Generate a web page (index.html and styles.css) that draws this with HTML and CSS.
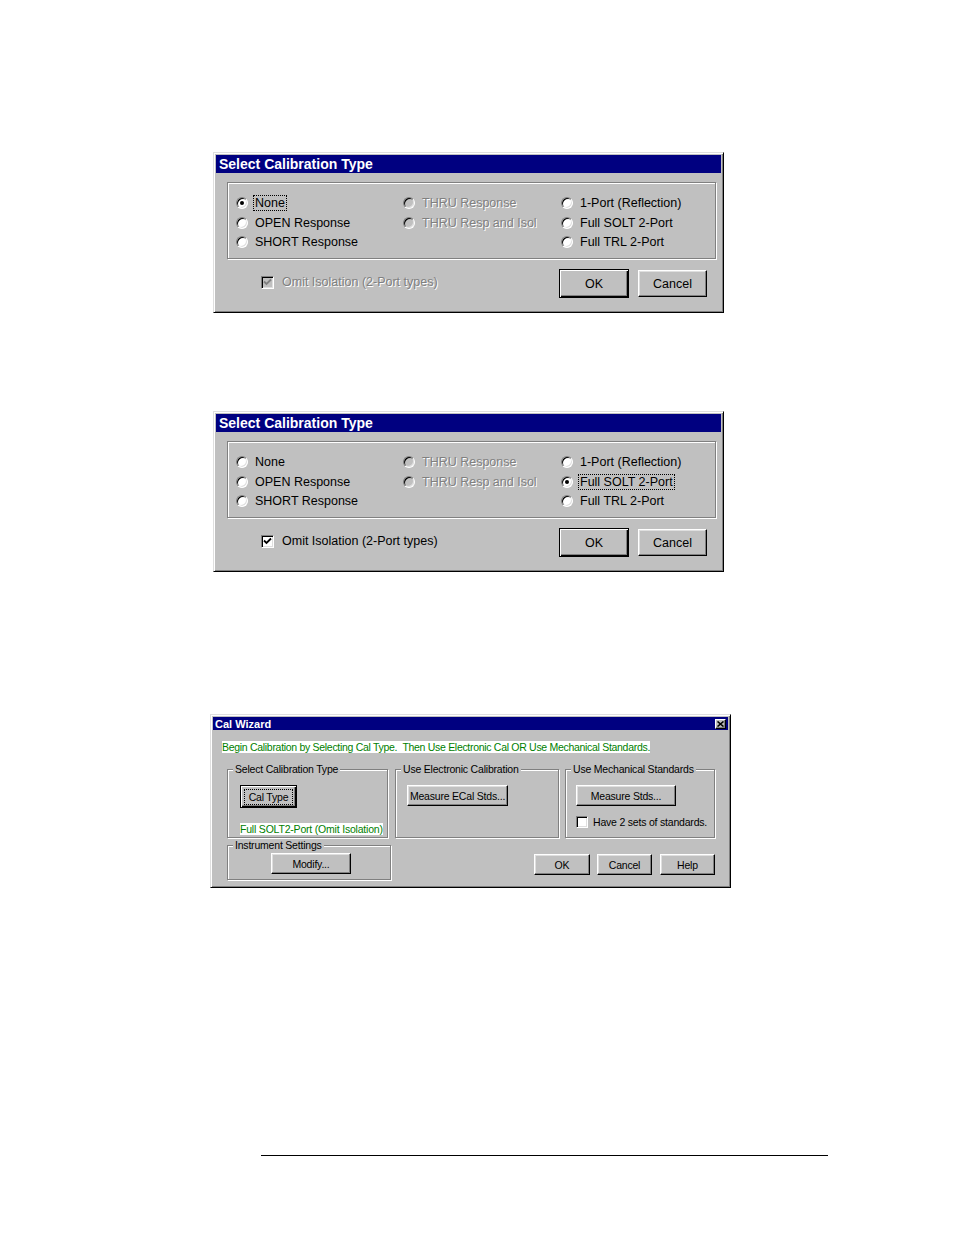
FILE: index.html
```html
<!DOCTYPE html>
<html>
<head>
<meta charset="utf-8">
<link rel="stylesheet" href="styles.css">
</head>
<body>
<div class="page">

  <div class="dialog sel first">
    <div class="titlebar"><span class="title-text">Select Calibration Type</span></div>
    <div class="sel-body">
      <div class="groupbox">
        <div class="radio-grid">
          <div class="opt"><span class="radio on"></span><span class="lbl focus">None</span></div>
          <div class="opt dis"><span class="radio"></span><span class="lbl">THRU Response</span></div>
          <div class="opt"><span class="radio"></span><span class="lbl">1-Port (Reflection)</span></div>
          <div class="opt"><span class="radio"></span><span class="lbl">OPEN Response</span></div>
          <div class="opt dis"><span class="radio"></span><span class="lbl">THRU Resp and Isol</span></div>
          <div class="opt"><span class="radio"></span><span class="lbl">Full SOLT 2-Port</span></div>
          <div class="opt"><span class="radio"></span><span class="lbl">SHORT Response</span></div>
          <div class="opt empty"></div>
          <div class="opt"><span class="radio"></span><span class="lbl">Full TRL 2-Port</span></div>
        </div>
      </div>
      <div class="sel-foot">
        <div class="chk-row dis">
          <span class="check"><svg viewBox="0 0 9 9" width="9" height="9"><path d="M1 3.5 L3.5 6 L8 1.5" fill="none" stroke="#808080" stroke-width="1.8"/></svg></span>
          <span class="lbl">Omit Isolation (2-Port types)</span>
        </div>
        <div class="btns">
          <div class="btn def ok">OK</div>
          <div class="btn cancel">Cancel</div>
        </div>
      </div>
    </div>
  </div>

  <div class="dialog sel second">
    <div class="titlebar"><span class="title-text">Select Calibration Type</span></div>
    <div class="sel-body">
      <div class="groupbox">
        <div class="radio-grid">
          <div class="opt"><span class="radio"></span><span class="lbl">None</span></div>
          <div class="opt dis"><span class="radio"></span><span class="lbl">THRU Response</span></div>
          <div class="opt"><span class="radio"></span><span class="lbl">1-Port (Reflection)</span></div>
          <div class="opt"><span class="radio"></span><span class="lbl">OPEN Response</span></div>
          <div class="opt dis"><span class="radio"></span><span class="lbl">THRU Resp and Isol</span></div>
          <div class="opt"><span class="radio on"></span><span class="lbl focus">Full SOLT 2-Port</span></div>
          <div class="opt"><span class="radio"></span><span class="lbl">SHORT Response</span></div>
          <div class="opt empty"></div>
          <div class="opt"><span class="radio"></span><span class="lbl">Full TRL 2-Port</span></div>
        </div>
      </div>
      <div class="sel-foot">
        <div class="chk-row">
          <span class="check"><svg viewBox="0 0 9 9" width="9" height="9"><path d="M1 3.5 L3.5 6 L8 1.5" fill="none" stroke="#000" stroke-width="1.8"/></svg></span>
          <span class="lbl">Omit Isolation (2-Port types)</span>
        </div>
        <div class="btns">
          <div class="btn def ok">OK</div>
          <div class="btn cancel">Cancel</div>
        </div>
      </div>
    </div>
  </div>

  <div class="dialog wiz">
    <div class="titlebar wiz-title">
      <span class="title-text">Cal Wizard</span>
      <span class="close-btn"><svg viewBox="0 0 7 6" width="7" height="6"><path d="M0.5 0.5 L6.5 5.5 M6.5 0.5 L0.5 5.5" stroke="#000" stroke-width="1.6" fill="none"/></svg></span>
    </div>
    <div class="wiz-body">
      <div class="green-line">Begin Calibration by Selecting Cal Type.&nbsp;&nbsp;Then Use Electronic Cal OR Use Mechanical Standards.</div>
      <div class="wiz-grid">
        <fieldset class="grp g-type">
          <legend>Select Calibration Type</legend>
          <div class="btn def sm caltype"><span class="focus-rect">Cal Type</span></div>
          <div class="green-note">Full SOLT2-Port (Omit Isolation)</div>
        </fieldset>
        <fieldset class="grp g-ecal">
          <legend>Use Electronic Calibration</legend>
          <div class="btn sm ecal">Measure ECal Stds...</div>
        </fieldset>
        <fieldset class="grp g-mech">
          <legend>Use Mechanical Standards</legend>
          <div class="btn sm mstds">Measure Stds...</div>
          <div class="mini-chk"><span class="check small"></span><span>Have 2 sets of standards.</span></div>
        </fieldset>
        <fieldset class="grp g-inst">
          <legend>Instrument Settings</legend>
          <div class="btn sm modify">Modify...</div>
        </fieldset>
        <div class="wiz-btns">
          <div class="btn sm w-ok">OK</div>
          <div class="btn sm w-cancel">Cancel</div>
          <div class="btn sm w-help">Help</div>
        </div>
      </div>
    </div>
  </div>

  <div class="rule"></div>
</div>
</body>
</html>
```

FILE: styles.css
```css
html, body {
  margin: 0;
  padding: 0;
  background: #fff;
}

.page {
  width: 954px;
  height: 1235px;
  overflow: hidden;
  font-family: "Liberation Sans", Arial, sans-serif;
  color: #000;
  display: flow-root;
}

/* ---------- generic window frame ---------- */
.dialog {
  box-sizing: border-box;
  background: #c0c0c0;
  border: 1px solid;
  border-color: #dfdfdf #000 #000 #dfdfdf;
  box-shadow: inset 1px 1px #fff, inset -1px -1px #808080;
  padding: 2px;
}

.titlebar {
  background: #000080;
  color: #fff;
  font-weight: bold;
  display: flex;
  align-items: center;
}

/* ---------- Select Calibration Type dialogs ---------- */
.sel {
  width: 511px;
  height: 161px;
}
.first { margin: 152px 0 0 213px; }
.second { margin: 98px 0 0 213px; }

.sel .titlebar {
  height: 18px;
  font-size: 14px;
  padding-left: 3px;
}

.sel-body {
  padding: 9px 0 0 11px;
  font-size: 12.5px;
}

.groupbox {
  box-sizing: border-box;
  width: 489px;
  height: 77px;
  border: 1px solid #808080;
  box-shadow: inset 1px 1px #fff, 1px 1px #fff;
  padding: 10px 0 0 8px;
}

.radio-grid {
  display: grid;
  grid-template-columns: 167px 158px 1fr;
  grid-template-rows: 20px 19.5px 19.5px;
}

.opt {
  display: flex;
  align-items: center;
}

.radio {
  box-sizing: border-box;
  flex: none;
  width: 12px;
  height: 12px;
  border-radius: 50%;
  border: 1px solid;
  border-color: #808080 #fff #fff #808080;
  background: #fff;
  box-shadow: inset 1px 1px #000, inset -1px -1px #dfdfdf;
  margin-right: 5px;
  display: flex;
  align-items: center;
  justify-content: center;
}
.radio.on::after {
  content: "";
  width: 4px;
  height: 4px;
  border-radius: 50%;
  background: #000;
}

.lbl {
  padding: 0 1px;
  border: 1px dotted transparent;
  line-height: 14px;
  white-space: nowrap;
}
.lbl.focus {
  border-color: #000;
}

.dis .lbl {
  color: #808080;
  text-shadow: 1px 1px 0 #fff;
}
.dis .radio {
  background: #c0c0c0;
}

.sel-foot {
  width: 489px;
  margin-top: 10px;
  display: flex;
  align-items: flex-start;
}

.chk-row {
  display: flex;
  align-items: center;
  margin: 5px 0 0 34px;
}

.check {
  box-sizing: border-box;
  flex: none;
  width: 13px;
  height: 13px;
  border: 1px solid;
  border-color: #808080 #fff #fff #808080;
  box-shadow: inset 1px 1px #000, inset -1px -1px #dfdfdf;
  background: #fff;
  display: flex;
  align-items: center;
  justify-content: center;
  margin-right: 6px;
}
.dis .check {
  background: #c0c0c0;
}

.btns {
  margin-left: auto;
  margin-right: 9px;
  display: flex;
  align-items: center;
  gap: 9px;
}

.btn {
  box-sizing: border-box;
  background: #c0c0c0;
  border: 1px solid;
  border-color: #fff #000 #000 #fff;
  box-shadow: inset -1px -1px #808080, inset 1px 1px #dfdfdf;
  display: flex;
  align-items: center;
  justify-content: center;
  white-space: nowrap;
}
.btn.def {
  border-color: #000;
  box-shadow: inset 1px 1px #fff, inset -1px -1px #000, inset -2px -2px #808080;
}

.ok { width: 70px; height: 29px; }
.cancel { width: 69px; height: 27px; }

/* ---------- Cal Wizard ---------- */
.wiz {
  width: 521px;
  height: 174px;
  margin: 142px 0 0 210px;
  font-size: 10.5px;
  letter-spacing: -0.2px;
}

.wiz-title {
  height: 13px;
  font-size: 11px;
  letter-spacing: 0;
  padding: 0 2px;
  justify-content: space-between;
}

.close-btn {
  box-sizing: border-box;
  width: 11px;
  height: 10px;
  background: #c0c0c0;
  border: 1px solid;
  border-color: #fff #000 #000 #fff;
  box-shadow: inset -1px -1px #808080;
  display: flex;
  align-items: center;
  justify-content: center;
}

.wiz-body {
  padding: 11px 0 0 9px;
}

.green-line {
  width: fit-content;
  background: #fff;
  color: #008000;
  line-height: 12px;
  height: 12px;
  letter-spacing: -0.3px;
  white-space: nowrap;
}

.wiz-grid {
  margin: 10px 0 0 5px;
  display: grid;
  grid-template-columns: 164px 164px 152px;
  column-gap: 4px;
  grid-template-rows: 75px 41px;
  row-gap: 1px;
}
.wiz-grid > .g-mech { margin-left: 2px; }

.grp {
  box-sizing: border-box;
  margin: 0;
  padding: 0 5px;
  min-width: 0;
  border: 1px solid #808080;
  box-shadow: inset 1px 1px #fff, 1px 1px #fff;
}
.grp legend {
  padding: 0 2px;
  line-height: 12px;
  background: #c0c0c0;
  white-space: nowrap;
}

.g-type { width: 161px; }

.btn.sm { height: 21px; }

.caltype {
  width: 57px;
  height: 23px !important;
  margin: 10px 0 0 7px;
}
.focus-rect {
  outline: 1px dotted #000;
  outline-offset: 1px;
  padding: 0 3px;
  line-height: 12px;
}

.green-note {
  width: fit-content;
  margin: 15px 0 0 7px;
  background: #fff;
  color: #008000;
  line-height: 12px;
  white-space: nowrap;
}

.ecal {
  width: 101px;
  margin: 10px 0 0 6px;
}

.mstds {
  width: 100px;
  margin: 10px 0 0 5px;
}

.mini-chk {
  display: flex;
  align-items: center;
  margin: 10px 0 0 5px;
  line-height: 12px;
  white-space: nowrap;
}
.check.small {
  width: 12px;
  height: 12px;
  margin-right: 5px;
}

.modify {
  width: 80px;
  margin: 2px 0 0 38px;
}

.wiz-btns {
  grid-column: 2 / 4;
  align-self: start;
  justify-self: end;
  margin: 15px 0 0 0;
  display: flex;
}
.w-ok { width: 56px; }
.w-cancel { width: 55px; margin-left: 7px; }
.w-help { width: 55px; margin-left: 8px; }

/* ---------- bottom rule ---------- */
.rule {
  margin: 267px 0 0 261px;
  width: 567px;
  height: 1px;
  background: #000;
}
```
